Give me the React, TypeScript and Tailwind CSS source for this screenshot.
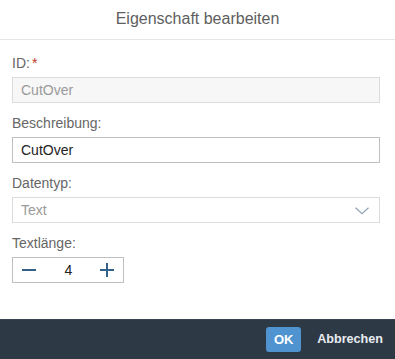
import React from "react";

function Label({ children }: { children: React.ReactNode }) {
  return <div className="h-[16px] leading-[16px] text-[14px] text-[#666666] mb-[6px]">{children}</div>;
}

export default function App() {
  return (
    <div
      className="w-[395px] h-[359px] flex flex-col bg-white overflow-hidden"
      style={{ fontFamily: '"Liberation Sans", Arial, sans-serif' }}
    >
      <div className="h-[40px] shrink-0 border-b border-[#e5e5e5] flex items-center justify-center text-[16px] text-[#5e5e5e] pb-[2px]">
        Eigenschaft bearbeiten
      </div>
      <div className="flex-1 pl-[12px] pr-[15px] pt-[15px]">
        <Label>
          ID:<span className="text-[#c0392b] ml-[2px]">*</span>
        </Label>
        <div className="h-[26px] border border-[#dcdcdc] bg-[#f7f7f7] flex items-center px-[8px] text-[14px] text-[#9a9a9a] mb-[12px]">
          CutOver
        </div>
        <Label>Beschreibung:</Label>
        <div className="h-[26px] border border-[#bfbfbf] bg-white flex items-center px-[8px] text-[14px] text-[#222222] mb-[12px]">
          CutOver
        </div>
        <Label>Datentyp:</Label>
        <div className="h-[26px] border border-[#dcdcdc] bg-white flex items-center justify-between pl-[8px] pr-[10px] text-[14px] text-[#9a9a9a] mb-[12px]">
          <span>Text</span>
          <svg width="14" height="8" viewBox="0 0 14 8" className="mt-[2px]">
            <polyline points="0.5,0.8 7,6.8 13.5,0.8" fill="none" stroke="#8fa2b8" strokeWidth="1.2" />
          </svg>
        </div>
        <Label>Textlänge:</Label>
        <div className="w-[112px] h-[26px] border border-[#bfbfbf] bg-white flex items-center justify-between px-[9px] text-[14px] text-[#222222]">
          <svg width="14" height="14" viewBox="0 0 14 14">
            <rect x="0" y="6" width="14" height="2" fill="#346187" />
          </svg>
          <span className="ml-[1px]">4</span>
          <svg width="14" height="14" viewBox="0 0 14 14">
            <rect x="0" y="6" width="14" height="2" fill="#346187" />
            <rect x="6" y="0" width="2" height="14" fill="#346187" />
          </svg>
        </div>
      </div>
      <div className="h-[40px] shrink-0 bg-[#2e3946] border-t border-[#3a4654] flex items-center justify-end pr-[12px] gap-[16px]">
        <div className="h-[25px] w-[35px] rounded-[3px] bg-[#4f93d0] flex items-center justify-center text-[13px] font-bold text-white">
          OK
        </div>
        <span className="text-[12.6px] font-bold text-[#e8ecf0]">Abbrechen</span>
      </div>
    </div>
  );
}
